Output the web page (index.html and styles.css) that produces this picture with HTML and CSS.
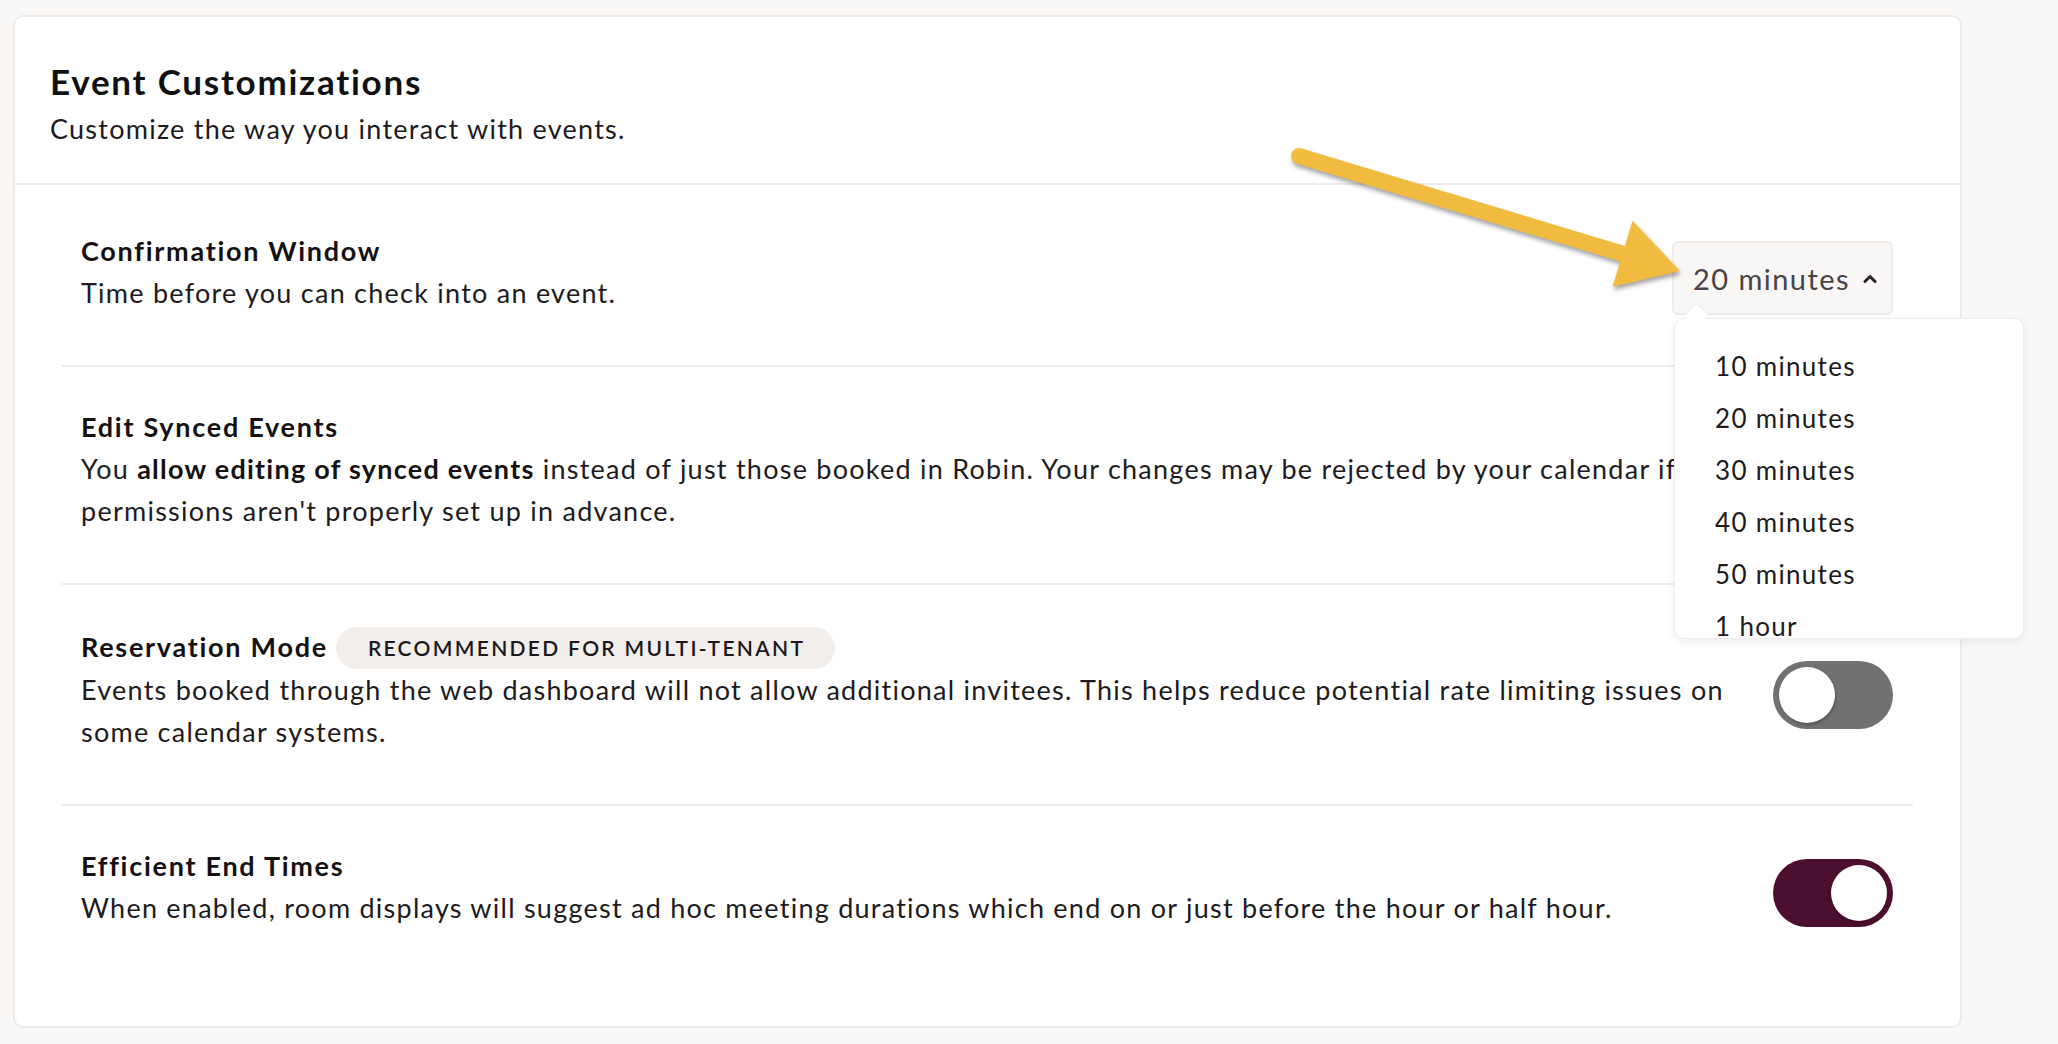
FILE: index.html
```html
<!DOCTYPE html>
<html lang="en">

<head>
    <meta charset="UTF-8">
    <meta name="viewport" content="width=device-width, initial-scale=1.0">
    <title>Event Customizations</title>
    <link rel="stylesheet" href="styles.css">
</head>

<body>

    <div class="page">

        <section class="card">
            <header class="card-head">
                <h2>Event Customizations</h2>
                <p>Customize the way you interact with events.</p>
            </header>

            <div class="settings">

                <div class="setting">
                    <div class="setting-text">
                        <h3 class="setting-title">Confirmation Window</h3>
                        <p>Time before you can check into an event.</p>
                    </div>
                    <div class="select">
                        <button class="select-btn">
                            <span>20 minutes</span>
                            <svg width="14" height="9" viewBox="0 0 14 9">
                                <polyline points="2,7.5 7,2.5 12,7.5" fill="none" stroke="#2b2226" stroke-width="3"
                                    stroke-linecap="round" stroke-linejoin="round" />
                            </svg>
                        </button>
                        <span class="select-caret"></span>
                        <ul class="select-menu">
                            <li>10 minutes</li>
                            <li>20 minutes</li>
                            <li>30 minutes</li>
                            <li>40 minutes</li>
                            <li>50 minutes</li>
                            <li>1 hour</li>
                        </ul>
                    </div>
                </div>

                <div class="setting">
                    <div class="setting-text">
                        <h3 class="setting-title">Edit Synced Events</h3>
                        <p>You <b>allow editing of synced events</b> instead of just those booked in Robin. Your changes
                            may be rejected by your calendar if permissions aren't properly set up in advance.</p>
                    </div>
                    <span class="toggle on"><span class="knob"></span></span>
                </div>

                <div class="setting">
                    <div class="setting-text">
                        <h3 class="setting-title">Reservation Mode <span class="badge">Recommended for multi-tenant</span>
                        </h3>
                        <p>Events booked through the web dashboard will not allow additional invitees. This helps reduce
                            potential rate limiting issues on some calendar systems.</p>
                    </div>
                    <span class="toggle"><span class="knob"></span></span>
                </div>

                <div class="setting">
                    <div class="setting-text">
                        <h3 class="setting-title">Efficient End Times</h3>
                        <p>When enabled, room displays will suggest ad hoc meeting durations which end on or just before
                            the hour or half hour.</p>
                    </div>
                    <span class="toggle on"><span class="knob"></span></span>
                </div>

            </div>
        </section>

        <!-- callout arrow drawn over the screenshot -->
        <svg class="callout" width="2058" height="1044" viewBox="0 0 2058 1044">
            <g transform="translate(1299 156) rotate(16.8)" fill="#f1bb40" stroke="#f1bb40">
                <line x1="0" y1="0" x2="345" y2="0" stroke-width="16" stroke-linecap="round" />
                <polygon points="398,0 338,-34.5 338,34.5" stroke="none" />
            </g>
        </svg>

    </div>

</body>

</html>
```

FILE: styles.css
```css
* {
    box-sizing: border-box;
}

body {
    margin: 0;
    background-color: #f9f8f7;
    font-family: Lato, "Open Sans", sans-serif;
    color: #201a1d;
    letter-spacing: 0.078em;
}

.page {
    position: relative;
    width: 2058px;
    height: 1044px;
    padding: 15px 0 0 13px;
    overflow: hidden;
}

.card {
    width: 1949px;
    background-color: #fff;
    border: 2px solid #eeeae7;
    border-radius: 10px;
}

.card-head {
    padding: 43px 35px 33px;
    border-bottom: 2px solid #f0ece9;
}

.card-head h2 {
    margin: 0;
    font-size: 35px;
    line-height: 42px;
    font-weight: 700;
    letter-spacing: 0.05em;
    color: #111;
}

.card-head p {
    margin: 6px 0 0;
    font-size: 27px;
    line-height: 42px;
}

.settings {
    margin: 0 47px;
    padding: 6px 0 46px;
}

.setting {
    display: flex;
    align-items: center;
    gap: 24px;
    padding: 0 20px 0 19px;
    border-bottom: 2px solid #f0ece9;
}

.setting:last-child {
    border-bottom: none;
}

.setting-text {
    flex: 1;
    padding: 39px 0 51px;
}

.setting-title {
    display: flex;
    align-items: center;
    gap: 8px;
    margin: 0;
    font-size: 27px;
    line-height: 42px;
    font-weight: 700;
    letter-spacing: 0.064em;
    color: #151113;
}

.setting-text p {
    margin: 0;
    font-size: 27px;
    line-height: 42px;
}

.setting-text b {
    font-weight: 700;
    color: #151113;
}

.badge {
    height: 42px;
    margin-top: 3px;
    padding: 0 30px 0 32px;
    border-radius: 21px;
    background-color: #f1eeeb;
    font-size: 21px;
    line-height: 42px;
    font-weight: 600;
    letter-spacing: 0.11em;
    text-transform: uppercase;
    color: #1d1719;
}

/* toggles */

.toggle {
    flex: none;
    display: flex;
    width: 120px;
    height: 68px;
    padding: 6px;
    border-radius: 34px;
    background-color: #727071;
}

.toggle.on {
    justify-content: flex-end;
    background-color: #4c0f2f;
}

.knob {
    width: 56px;
    height: 56px;
    border-radius: 50%;
    background-color: #fff;
    box-shadow: 1px 2px 3px rgba(0, 0, 0, 0.25);
}

.toggle.on .knob {
    box-shadow: -1px 2px 3px rgba(0, 0, 0, 0.2);
}

/* dropdown */

.select {
    position: relative;
    flex: none;
}

.select-btn {
    display: flex;
    align-items: center;
    gap: 13px;
    height: 74px;
    padding: 0 14px 0 19px;
    background-color: #f8f7f6;
    border: 2px solid #efebe8;
    border-radius: 6px;
    font-family: inherit;
    font-size: 29px;
    letter-spacing: 0.05em;
    color: #4a4346;
}

.select-menu {
    position: absolute;
    top: 77px;
    left: 2px;
    width: 350px;
    height: 321px;
    margin: 0;
    padding: 21px 0 0 40px;
    list-style: none;
    background-color: #fff;
    border: 1px solid #f0ece9;
    border-radius: 10px;
    box-shadow: 0 3px 10px rgba(0, 0, 0, 0.07);
    overflow: hidden;
    z-index: 2;
}

.select-menu li {
    font-size: 26px;
    line-height: 52px;
    letter-spacing: 0.05em;
    color: #201a1d;
}

.select-caret {
    position: absolute;
    top: 65px;
    left: 16px;
    width: 17px;
    height: 17px;
    background-color: #fff;
    border-top: 1px solid #eeeae7;
    border-left: 1px solid #eeeae7;
    transform: rotate(45deg);
    z-index: 3;
}

/* annotation */

.callout {
    position: absolute;
    top: 0;
    left: 0;
    pointer-events: none;
    z-index: 5;
}

.callout g {
    filter: drop-shadow(2px 3px 2px rgba(0, 0, 0, 0.35));
}
```
